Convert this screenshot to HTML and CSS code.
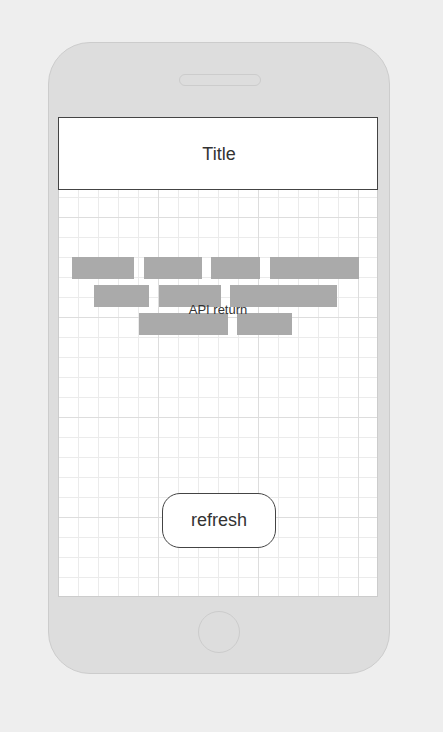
FILE: index.html
```html
<!DOCTYPE html>
<html lang="en">
<head>
    <meta charset="UTF-8">
    <meta name="viewport" content="width=device-width, initial-scale=1.0">
    <title>API return</title>
    <link rel="stylesheet" href="styles.css">
</head>
<body>
    <div class="phone">
        <div class="speaker"></div>

        <div class="screen">
            <div class="title-bar">Title</div>

            <div class="results">
                <div class="chips">
                    <span class="chip" style="width: 62px"></span>
                    <span class="chip" style="width: 58px"></span>
                    <span class="chip" style="width: 49px"></span>
                    <span class="chip" style="width: 89px"></span>
                    <span class="chip" style="width: 55px"></span>
                    <span class="chip" style="width: 62px"></span>
                    <span class="chip" style="width: 107px"></span>
                    <span class="chip" style="width: 89px"></span>
                    <span class="chip" style="width: 55px"></span>
                </div>
                <span class="results-label">API return</span>
            </div>

            <button class="refresh">refresh</button>
        </div>

        <div class="home-button"></div>
    </div>
</body>
</html>
```

FILE: styles.css
```css
body { margin: 0; background-color: #eeeeee; font-family: "Liberation Sans", Arial, sans-serif; color: #333; }

.phone { box-sizing: border-box; width: 342px; height: 632px; margin: 42px 0 0 48px; padding: 31px 0 20px; display: flex; flex-direction: column; align-items: flex-start; background-color: #dddddd; border: 1px solid #cccccc; border-radius: 42px; }
.speaker { box-sizing: border-box; width: 82px; height: 12px; margin-left: 130px; border: 1px solid #cccccc; border-radius: 6px; }
.home-button { box-sizing: border-box; width: 42px; height: 42px; margin: 14px 0 0 149px; border: 1px solid #cccccc; border-radius: 50%; }

/* screen area with a 20px / 100px grid */
.screen {
    box-sizing: border-box; width: 320px; height: 480px; margin: 31px 0 0 9px; display: flex; flex-direction: column;
    background-color: #fff; border: 1px solid #cccccc; background-origin: border-box;
    background-image:
        linear-gradient(#dddddd 1px, transparent 1px),
        linear-gradient(90deg, #dddddd 1px, transparent 1px),
        linear-gradient(#ebebeb 1px, transparent 1px),
        linear-gradient(90deg, #ebebeb 1px, transparent 1px);
    background-size: 100px 100px, 100px 100px, 20px 20px, 20px 20px;
}

.title-bar { box-sizing: border-box; height: 73px; margin: -1px -1px 0; padding: 2px 0 0 2px; display: flex; align-items: center; justify-content: center; background-color: #fff; border: 1px solid #444; font-size: 18px; }

.results { position: relative; margin-top: 67px; }
.chips { display: flex; flex-wrap: wrap; justify-content: center; gap: 6px 9.5px; padding: 0 5px 0 0; }
.chip { display: block; height: 22px; background-color: #aaaaaa; }
.results-label { position: absolute; left: 0; right: 0; top: 45px; text-align: center; font-size: 13px; line-height: 15px; }

.refresh { box-sizing: border-box; width: 114px; height: 55px; margin: 158px 0 0 103px; padding: 0; background-color: #fff; border: 1px solid #444; border-radius: 18px; font-family: inherit; font-size: 18px; color: #333; }
```
